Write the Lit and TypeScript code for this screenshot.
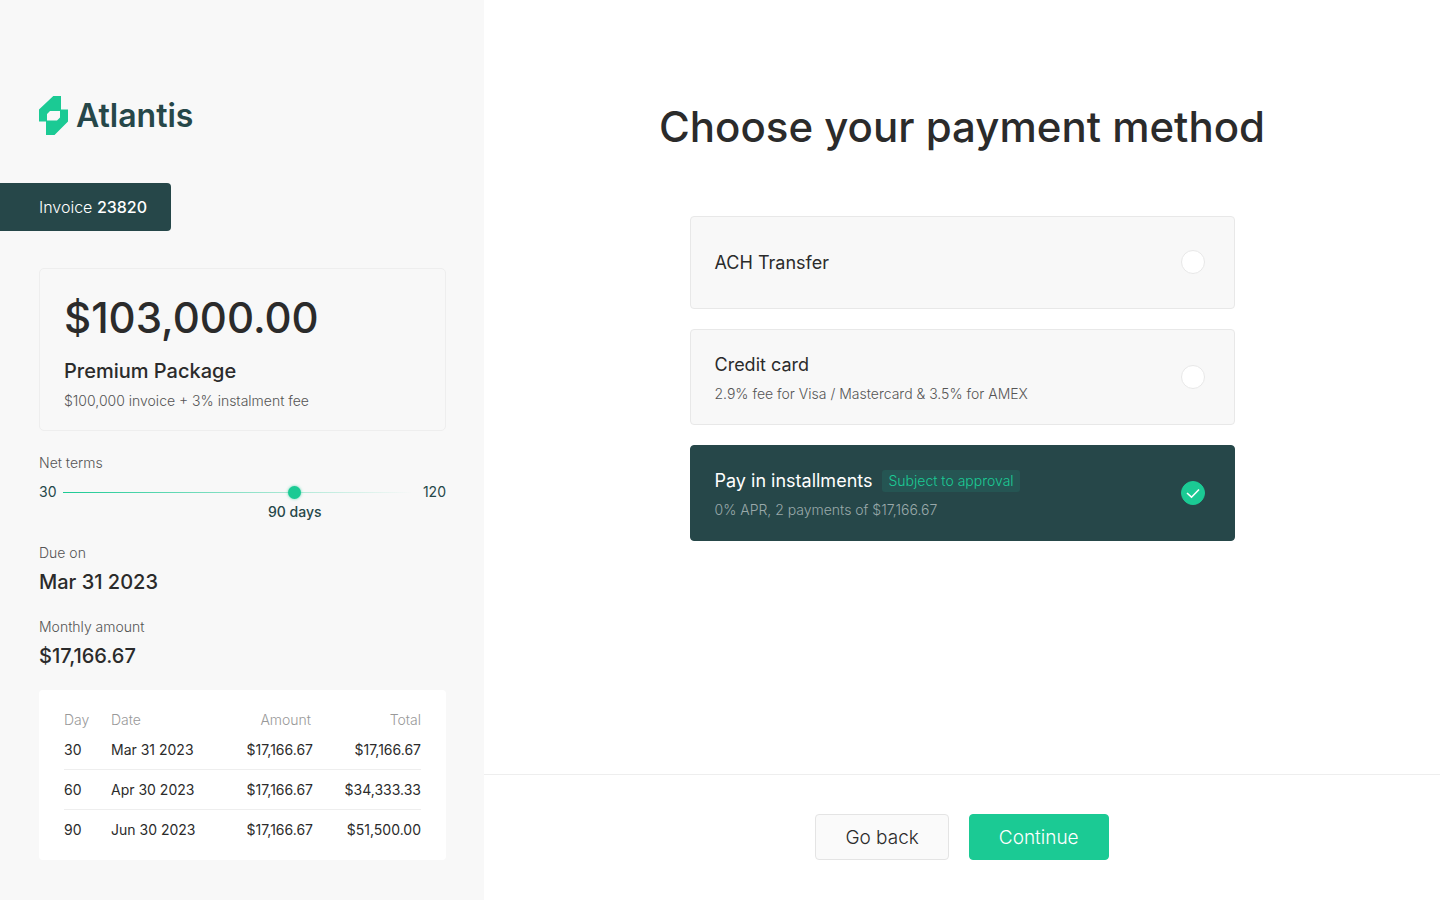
import { LitElement, html, css, svg, nothing } from "lit";
import { customElement, property, state } from "lit/decorators.js";
import { classMap } from "lit/directives/class-map.js";
import { styleMap } from "lit/directives/style-map.js";

interface Installment {
  day: number;
  date: string;
  amount: string;
  total: string;
}

interface Method {
  id: string;
  name: string;
  note?: string;
  badge?: string;
}

const INSTALLMENTS: Installment[] = [
  { day: 30, date: "Mar 31 2023", amount: "$17,166.67", total: "$17,166.67" },
  { day: 60, date: "Apr 30 2023", amount: "$17,166.67", total: "$34,333.33" },
  { day: 90, date: "Jun 30 2023", amount: "$17,166.67", total: "$51,500.00" },
];

const METHODS: Method[] = [
  { id: "ach", name: "ACH Transfer" },
  { id: "card", name: "Credit card", note: "2.9% fee for Visa / Mastercard & 3.5% for AMEX" },
  {
    id: "installments",
    name: "Pay in installments",
    note: "0% APR, 2 payments of $17,166.67",
    badge: "Subject to approval",
  },
];

const MIN_DAYS = 30;
const MAX_DAYS = 120;

@customElement("terms-slider")
class TermsSlider extends LitElement {
  static styles = css`
    :host {
      display: block;
      font-size: 14px;
      line-height: 20px;
      color: #264749;
    }
    .label {
      display: block;
      color: #555;
      font-weight: 300;
    }
    .row {
      display: flex;
      align-items: flex-start;
      gap: 7px;
      margin-top: 9px;
    }
    .control {
      flex: 1;
      min-width: 0;
      padding-right: 3px;
    }
    .range {
      display: block;
      width: 100%;
      height: 20px;
      margin: 0;
      appearance: none;
      background: linear-gradient(90deg, #1bca94, rgba(38, 71, 73, 0)) center / 100% 1px no-repeat;
    }
    .range::-webkit-slider-thumb {
      appearance: none;
      width: 13px;
      height: 13px;
      border-radius: 50%;
      background: #1bca94;
      box-shadow: 0 0 3px rgba(27, 202, 148, 0.7);
    }
    .value {
      display: block;
      width: fit-content;
      font-weight: 500;
      transform: translateX(-50%);
    }
  `;

  @property({ type: Number }) days = 90;

  private onInput(e: Event) {
    this.days = Number((e.target as HTMLInputElement).value);
  }

  render() {
    const share = (this.days - MIN_DAYS) / (MAX_DAYS - MIN_DAYS);
    const at = { marginLeft: `calc(7px + (100% - 13px) * ${share})` };
    return html`
      <label class="label" for="days">Net terms</label>
      <div class="row">
        <span>${MIN_DAYS}</span>
        <div class="control">
          <input class="range" id="days" type="range" min=${MIN_DAYS} max=${MAX_DAYS} step="30"
            .value=${String(this.days)} @input=${this.onInput} />
          <output class="value" for="days" style=${styleMap(at)}>${this.days} days</output>
        </div>
        <span>${MAX_DAYS}</span>
      </div>
    `;
  }
}

@customElement("invoice-panel")
class InvoicePanel extends LitElement {
  static styles = css`
    :host {
      display: flex;
      flex-direction: column;
      padding: 96px 38px 40px 39px;
      background: #f8f8f8;
      color: #2b2b2b;
      font-size: 14px;
      line-height: 20px;
    }
    .brand {
      display: flex;
      align-items: center;
      gap: 8px;
      height: 40px;
      color: #264749;
      font-size: 32px;
      font-weight: 600;
      line-height: 40px;
    }
    .tab {
      align-self: flex-start;
      margin: 47px 0 0 -39px;
      padding: 12px 24px 12px 39px;
      border-radius: 0 4px 4px 0;
      background: #264749;
      color: #fff;
      font-size: 16px;
      font-weight: 300;
      line-height: 24px;
    }
    .number {
      font-weight: 500;
    }
    .summary {
      margin-top: 37px;
      padding: 23px 24px 19px;
      border: 1px solid #eee;
      border-radius: 5px;
    }
    .price {
      margin: 0;
      font-size: 42px;
      line-height: 52px;
      font-weight: 450;
    }
    .package {
      margin: 13px 0 6px;
      font-size: 20px;
      line-height: 28px;
      font-weight: 450;
    }
    .muted {
      margin: 0;
      color: #555;
      font-weight: 300;
    }
    .terms {
      margin-top: 22px;
    }
    .fact {
      margin: 21px 0 0;
    }
    .fact dd {
      margin: 5px 0 0;
      font-size: 20px;
      line-height: 28px;
      font-weight: 450;
    }
    .card {
      margin-top: 20px;
      padding: 20px 25px 11px;
      border-radius: 4px;
      background: #fff;
    }
    .plan {
      width: 100%;
      border-collapse: collapse;
    }
    .plan th {
      padding: 0;
      color: #999;
      font-weight: 300;
      text-align: left;
    }
    .plan td {
      padding: 10px 0 9px;
      border-bottom: 1px solid #eee;
    }
    .plan tr:last-child td {
      border-bottom: 0;
    }
    .plan .day {
      width: 47px;
    }
    .plan .amount,
    .plan .total {
      text-align: right;
    }
    .plan th.amount {
      padding-right: 2px;
    }
    .plan .total {
      width: 108px;
    }
  `;

  render() {
    return html`
      <div class="brand">
        <svg width="29" height="40" viewBox="0 0 29 40" aria-hidden="true">
          <path fill="#1bca94" fill-rule="evenodd"
            d="M14.300 0H22V13.500H29V25.500L15.500 39H7V25.500H0V13.500ZM11 15L8 18V24.500H18L21 21.500V15Z" />
        </svg>
        <span>Atlantis</span>
      </div>
      <div class="tab">Invoice <span class="number">23820</span></div>
      <section class="summary">
        <p class="price">$103,000.00</p>
        <p class="package">Premium Package</p>
        <p class="muted">$100,000 invoice + 3% instalment fee</p>
      </section>
      <terms-slider class="terms" .days=${90}></terms-slider>
      <dl class="fact">
        <dt class="muted">Due on</dt>
        <dd>Mar 31 2023</dd>
      </dl>
      <dl class="fact">
        <dt class="muted">Monthly amount</dt>
        <dd>$17,166.67</dd>
      </dl>
      <div class="card">
        <table class="plan">
          <thead>
            <tr>
              <th class="day">Day</th>
              <th>Date</th>
              <th class="amount">Amount</th>
              <th class="total">Total</th>
            </tr>
          </thead>
          <tbody>
            ${INSTALLMENTS.map(
              (row) => html`<tr>
                <td>${row.day}</td>
                <td>${row.date}</td>
                <td class="amount">${row.amount}</td>
                <td class="total">${row.total}</td>
              </tr>`
            )}
          </tbody>
        </table>
      </div>
    `;
  }
}

@customElement("method-picker")
class MethodPicker extends LitElement {
  static styles = css`
    :host {
      display: block;
    }
    .list {
      display: flex;
      flex-direction: column;
      gap: 20px;
      margin: 0;
      padding: 0;
      border: 0;
    }
    .option {
      display: flex;
      align-items: center;
      justify-content: space-between;
      gap: 24px;
      box-sizing: border-box;
      min-height: 93px;
      padding: 21px 29px 20px 24px;
      border: 1px solid #e8e8e8;
      border-radius: 4px;
      background: #f8f8f8;
      color: #2b2b2b;
      cursor: pointer;
    }
    .title {
      display: flex;
      align-items: center;
      gap: 10px;
      font-size: 18px;
      line-height: 28px;
    }
    .note {
      display: block;
      margin-top: 5px;
      color: #555;
      font-size: 14px;
      font-weight: 300;
      line-height: 20px;
    }
    .badge {
      padding: 1px 6px;
      border-radius: 3px;
      background: #255553;
      color: #1bca94;
      font-size: 14px;
      font-weight: 300;
      line-height: 20px;
    }
    .mark {
      display: grid;
      flex: none;
      margin-bottom: 2px;
    }
    .radio,
    .check {
      grid-area: 1 / 1;
    }
    .radio {
      appearance: none;
      box-sizing: border-box;
      width: 24px;
      height: 24px;
      margin: 0;
      border: 1px solid #e8e8e8;
      border-radius: 50%;
      background: #fff;
    }
    .check {
      pointer-events: none;
    }
    .selected {
      border-color: #264749;
      background: #264749;
      color: #fff;
    }
    .selected .note {
      color: #9aa9aa;
    }
    .selected .radio {
      border-color: #1bca94;
      background: #1bca94;
    }
  `;

  @state() private selected = "installments";

  render() {
    return html`
      <fieldset class="list" aria-label="Payment method">
        ${METHODS.map((m) => {
          const on = m.id === this.selected;
          return html`<label class=${classMap({ option: true, selected: on })} for=${m.id}>
            <span>
              <span class="title">
                ${m.name}${m.badge ? html`<span class="badge">${m.badge}</span>` : nothing}
              </span>
              ${m.note ? html`<span class="note">${m.note}</span>` : nothing}
            </span>
            <span class="mark">
              <input class="radio" type="radio" name="method" id=${m.id} .checked=${on}
                @change=${() => (this.selected = m.id)} />
              ${on
                ? html`<svg class="check" width="24" height="24" viewBox="0 0 24 24" aria-hidden="true">
                    ${svg`<path d="M6 12L10.500 16.200L18 8.500" fill="none" stroke="#fff" stroke-width="1.600" />`}
                  </svg>`
                : nothing}
            </span>
          </label>`;
        })}
      </fieldset>
    `;
  }
}

@customElement("app-root")
class AppRoot extends LitElement {
  static styles = css`
    :host {
      display: grid;
      grid-template-columns: minmax(400px, 484px) minmax(0, 1fr);
      min-height: 100vh;
      background: #fff;
      color: #2b2b2b;
      font-family: Inter, "Liberation Sans", sans-serif;
    }
    .main {
      display: flex;
      flex-direction: column;
    }
    .content {
      display: flex;
      flex: 1;
      flex-direction: column;
      align-items: center;
      padding: 101px 24px 40px;
    }
    .heading {
      margin: 0 0 63px;
      font-size: 42px;
      line-height: 52px;
      font-weight: 450;
      text-align: center;
    }
    .methods {
      width: 100%;
      max-width: 545px;
    }
    .footer {
      display: flex;
      justify-content: center;
      gap: 20px;
      padding: 39px 24px 40px;
      border-top: 1px solid #eee;
    }
    .button {
      padding: 9px 29px 7px;
      border: 1px solid #e4e4e4;
      border-radius: 4px;
      background: #fafafa;
      color: #2b2b2b;
      font: inherit;
      font-size: 19px;
      font-weight: 300;
      line-height: 28px;
      cursor: pointer;
    }
    .primary {
      border-color: #1bca94;
      background: #1bca94;
      color: #fff;
    }
  `;

  render() {
    return html`
      <invoice-panel></invoice-panel>
      <main class="main">
        <div class="content">
          <h1 class="heading">Choose your payment method</h1>
          <method-picker class="methods"></method-picker>
        </div>
        <footer class="footer">
          <button class="button" type="button">Go back</button>
          <button class="button primary" type="button">Continue</button>
        </footer>
      </main>
    `;
  }
}
